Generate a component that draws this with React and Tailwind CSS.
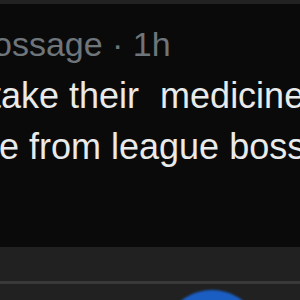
export default function App() {
  return (
    <div className="w-[300px] h-[300px] overflow-hidden bg-[#0a0a0a] relative flex flex-col" style={{ fontFamily: '"Liberation Sans", Arial, sans-serif' }}>
      <div className="h-[4px] bg-[#222222] shrink-0" />
      <div className="flex-1 flex flex-col pt-[20px] overflow-hidden">
        <div className="whitespace-nowrap text-[34px] leading-[40px] text-[#6e757b] ml-[-7px]">ossage · 1h</div>
        <div className="whitespace-nowrap text-[36px] leading-[51px] text-[#e9eaeb] ml-[-9px] mt-[6px]">
          take their <span className="ml-[11px]">medicine</span>
        </div>
        <div className="whitespace-nowrap text-[36px] leading-[51px] text-[#e9eaeb] ml-[-1px]">e from league boss</div>
      </div>
      <div className="h-[34px] bg-[#212121] shrink-0" />
      <div className="h-[3px] bg-[#393939] shrink-0" />
      <div className="h-[16px] bg-[#212121] shrink-0" />
      <div className="absolute left-[162px] top-[290px] w-[100px] h-[100px] rounded-full bg-[#1a5ec4] blur-[1px]" />
    </div>
  );
}
